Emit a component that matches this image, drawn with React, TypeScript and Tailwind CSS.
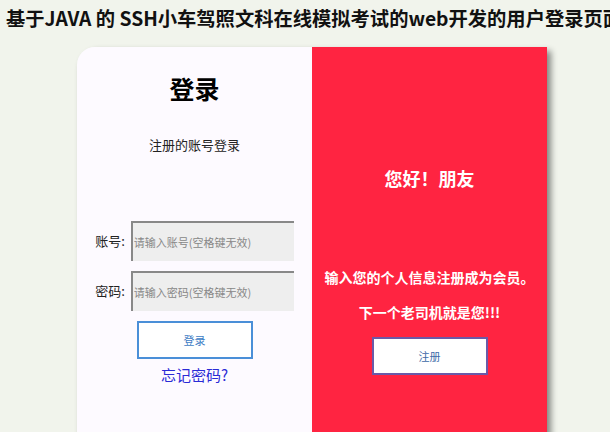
export default function App() {
    const font = { fontFamily: '"Noto Sans CJK SC", "Noto Sans", sans-serif' };

    return (
        <div
            className="h-[432px] w-[610px] overflow-hidden bg-[#f1f4ec] text-black"
            style={font}
        >
            <h1 className="h-[47px] whitespace-nowrap pt-[4px] pl-[6px] text-[19.3px] leading-[28px] font-bold text-[#111]">
                基于JAVA 的 SSH小车驾照文科在线模拟考试的web开发的用户登录页面
            </h1>

            <div className="ml-[77px] flex h-[420px] w-[470px] overflow-hidden rounded-tl-[18px] shadow-[4px_4px_6px_rgba(0,0,0,0.45)]">
                {/* Login side */}
                <div className="flex w-[235px] flex-col items-center bg-[#fdfaff]">
                    <h2 className="mt-[24px] text-[25px] leading-[34px] font-bold">
                        登录
                    </h2>
                    <p className="mt-[31px] text-[13px] leading-[18px] text-[#222]">
                        注册的账号登录
                    </p>

                    <div className="mt-[67px] flex flex-col gap-[10px]">
                        <div className="flex items-center gap-[6px]">
                            <span className="text-[13px] leading-[18px] text-[#222]">账号:</span>
                            <input
                                placeholder="请输入账号(空格键无效)"
                                className="h-[40px] w-[163px] border-t-2 border-l-2 border-t-[#888] border-l-[#888] bg-[#eeeeee] px-[1px] text-[11px] placeholder:text-[#888]"
                            />
                        </div>
                        <div className="flex items-center gap-[6px]">
                            <span className="text-[13px] leading-[18px] text-[#222]">密码:</span>
                            <input
                                placeholder="请输入密码(空格键无效)"
                                className="h-[40px] w-[163px] border-t-2 border-l-2 border-t-[#888] border-l-[#888] bg-[#eeeeee] px-[1px] text-[11px] placeholder:text-[#888]"
                            />
                        </div>
                    </div>

                    <button className="mt-[10px] h-[38px] w-[116px] border-2 border-[#4a8fd8] bg-white text-[11px] leading-[16px] text-[#3d7cc4]">
                        登录
                    </button>
                    <a className="mt-[6px] text-[15px] leading-[20px] text-[#2a2ad6]">
                        忘记密码?
                    </a>
                </div>

                {/* Register side */}
                <div className="flex w-[235px] flex-col items-center bg-[#ff2441] text-white">
                    <h2 className="mt-[118px] text-[18px] leading-[26px] font-bold">
                        您好！朋友
                    </h2>
                    <p className="mt-[76px] text-[14px] leading-[20px] font-bold">
                        输入您的个人信息注册成为会员。
                    </p>
                    <p className="mt-[15px] text-[14px] leading-[20px] font-bold">
                        下一个老司机就是您!!!
                    </p>
                    <button className="mt-[15px] h-[38px] w-[116px] border-2 border-[#6a5aa8] bg-white text-[11px] leading-[16px] text-[#3d6aa8]">
                        注册
                    </button>
                </div>
            </div>
        </div>
    );
}
